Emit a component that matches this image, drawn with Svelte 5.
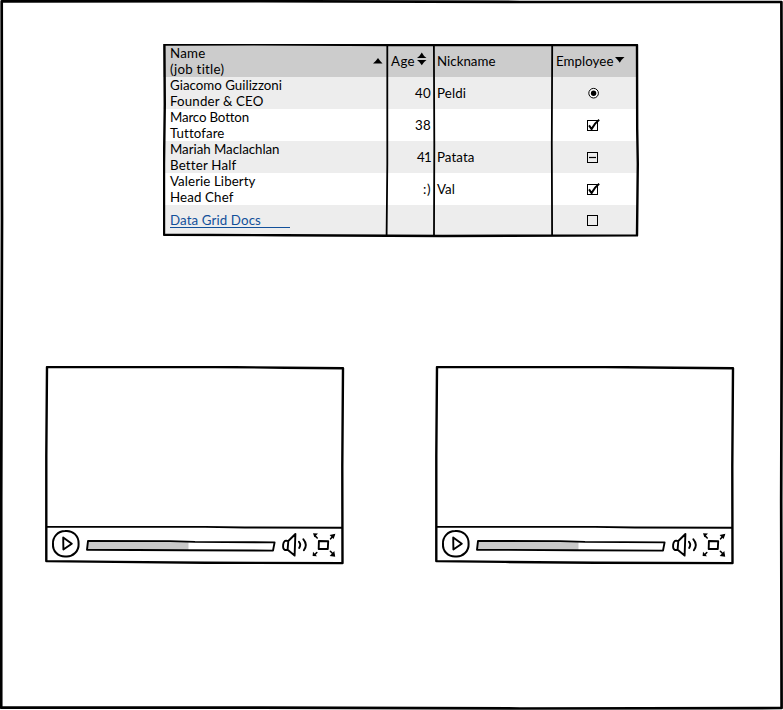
<script>
  const rows = [
    { name: ['Giacomo Guilizzoni', 'Founder & CEO'], w: [112, 93.5], age: '40', aw: 16, nick: 'Peldi', nw: 29, mark: 'radio' },
    { name: ['Marco Botton', 'Tuttofare'], w: [78.5, 54], age: '38', aw: 16, nick: '', nw: 0, mark: 'checked' },
    { name: ['Mariah Maclachlan', 'Better Half'], w: [109.5, 66], age: '41', aw: 14, nick: 'Patata', nw: 37.5, mark: 'mixed' },
    { name: ['Valerie Liberty', 'Head Chef'], w: [85.5, 63.5], age: ':)', aw: 8, nick: 'Val', nw: 18, mark: 'checked' }
  ];
  const players = ['left', 'right'];

  // Spread the letters so that a label takes up the given width.
  function fit(node, width) {
    const natural = node.getBoundingClientRect().width;
    const n = node.textContent.length;
    const gap = (width - natural) / n;
    node.style.letterSpacing = `${gap}px`;
  }
</script>

{#snippet mark(kind)}
  <svg class="mark" width="16" height="16" viewBox="0 0 16 16">
    {#if kind === 'radio'}
      <circle cx="8.6" cy="8.2" r="4.8" fill="#fff" stroke="#000" stroke-width="1" />
      <circle cx="8.6" cy="8.2" r="2.7" />
    {:else}
      <rect x="2.5" y="3.5" width="10" height="10" fill="none" stroke="#000" stroke-width="1" />
      {#if kind === 'checked'}
        <path d="M4 8.4 L6.6 12 Q9.8 6 14.2 2.8" fill="none" stroke="#000" stroke-width="2" />
      {:else if kind === 'mixed'}
        <path d="M4 8.5 H11" stroke="#000" stroke-width="1.2" />
      {/if}
    {/if}
  </svg>
{/snippet}

<main>
  <svg class="ink outer" width="783" height="710" viewBox="0 0 783 710">
    <path d="M1.7 1.4 L260 1.2 L520 2 L781.4 2 L782 240 L781.2 500 L781.6 708 L520 708.5 L260 707.7 L1.2 707.7 L1.2 500 L2 220 Z" />
  </svg>

  <section class="grid">
    <div class="row head">
      <div class="cell name">
        <span><i use:fit={35.5}>Name</i></span>
        <span><i use:fit={54.5}>(job title)</i></span>
        <svg class="sort" width="10" height="6" viewBox="0 0 10 6"><path d="M0 5.5 Q3 3 5 0 Q7 3 9.5 5.5Z" /></svg>
      </div>
      <div class="cell age-head">
        <i use:fit={24}>Age</i>
        <svg width="10" height="14" viewBox="0 0 10 14"><path d="M0 6 Q3 4 4.8 .5 Q6.5 4 9.5 6Z M0 8 L9.5 8 Q6.5 10 4.8 13.2 Q3 10 0 8Z" /></svg>
      </div>
      <div class="cell nick"><i use:fit={58.5}>Nickname</i></div>
      <div class="cell emp-head">
        <i use:fit={57.5}>Employee</i>
        <svg width="10" height="6" viewBox="0 0 10 6"><path d="M0 0 L9.5 0 Q6 3 4.8 5.8 Q3 3 0 0Z" /></svg>
      </div>
    </div>
    {#each rows as r}
      <div class="row">
        <div class="cell name">
          {#each r.name as line, k}
            <span><i use:fit={r.w[k]}>{line}</i></span>
          {/each}
        </div>
        <div class="cell age"><i use:fit={r.aw}>{r.age}</i></div>
        <div class="cell nick">{#if r.nick}<i use:fit={r.nw}>{r.nick}</i>{/if}</div>
        <div class="cell emp">{@render mark(r.mark)}</div>
      </div>
    {/each}
    <div class="row last">
      <div class="cell name"><a href="#docs"><i use:fit={91}>Data Grid Docs</i></a></div>
      <div class="cell"></div>
      <div class="cell"></div>
      <div class="cell emp">{@render mark('empty')}</div>
    </div>
    <svg class="ink" width="476" height="194" viewBox="0 0 476 194">
      <path d="M1.4 .6 L90 .3 L230 1 L474 1 L474.2 85 L474.8 120 L474 191.4 L280 192 L120 191.2 L1 190.8 L1 120 L1.8 60Z" />
      <path class="rule" d="M224.3 1 L224.3 120 L223.6 191 M270.9 1 L271.3 100 L271 192 M389.2 1 L388.8 100 L389.1 192" />
    </svg>
  </section>

  <div class="players">
    {#each players as side (side)}
      <section class="player">
        <div class="screen"></div>
        <div class="controls">
          <svg class="play" width="30" height="30" viewBox="0 0 30 30">
            <path d="M14 2 C22 1 28 7 27.6 15 C28 22 22 28 15 27.5 C7 28 1.5 22 2 15 C1.5 8 7 2 14 2Z" />
            <path class="thin" d="M12.2 8.5 L20.8 14.7 L12.4 20.5Z" />
          </svg>
          <svg class="track" width="192" height="14" viewBox="0 0 192 14">
            <path class="fill" d="M3 2 H103.5 V11 H3Z" />
            <path class="thin" d="M3 2 L85 2.1 L110 2.9 L189.6 3.4 L188 11.6 L100 11.3 L2 10.7Z" />
          </svg>
          <svg class="sound" width="28" height="26" viewBox="0 0 28 26">
            <path class="thin" d="M5.5 8.7 C1.6 8 1 17 4 18 L6.6 17.8 L7.3 9 L14.4 2 L13.6 23.6 L6.6 17.8 M5.5 8.7 L7.3 9" />
            <path class="thin" d="M18 9.8 Q20.4 12.5 18.2 16 M22.4 7.3 Q27 12.5 22.9 18.3" />
          </svg>
          <svg class="full" width="24" height="26" viewBox="0 0 24 26">
            <path class="thin" d="M6.9 9 L16.2 9.2 L15.8 17 L6.7 17Z" />
            <path class="dash" d="M2.8 3.6 L5.2 6 M18.6 6.8 L21.6 3.6 M4.8 20.5 L2.7 22.7 M18.4 19.3 L21.6 22.5" />
            <path class="solid" d="M1 1.2 L6 1.6 L2.4 5.3Z M17.6 3 L23.4 1.8 L21.6 7Z M1 19.8 L5 24.2 L.6 24Z M22.3 19 L23.2 24.8 L17.7 24Z" />
          </svg>
        </div>
        <svg class="ink" width="300" height="200" viewBox="0 0 300 200">
          <path d="M2 1.1 L170 1 L240 1.7 L298 2.2 L297.3 100 L297.5 197.1 L160 196.8 L70 195.9 L1.3 195.1 L1.3 90Z" />
          <path class="thin" d="M2 160.9 L160 160.9 L200 161.5 L297 161.8" />
        </svg>
      </section>
    {/each}
  </div>
</main>

<style>
  :global(body) { margin: 0; background: #fff; }
  main {
    position: relative;
    box-sizing: border-box;
    width: 783px;
    height: 710px;
    padding-top: 44px;
    overflow: hidden;
    font: 400 13.3px/16px Lato, "Liberation Sans", sans-serif;
    color: #000;
  }
  i { font-style: normal; white-space: nowrap; display: inline-block; }
  svg { display: block; flex: none; }
  .ink {
    position: absolute;
    left: 0;
    top: 0;
    fill: none;
    stroke: #000;
    stroke-width: 2.4;
    stroke-linejoin: round;
    pointer-events: none;
  }
  .outer { stroke-width: 2.7; }
  .ink .rule { stroke-width: 1.8; }
  .grid { position: relative; width: 474px; height: 192px; margin-left: 163px; }
  .row {
    display: grid;
    grid-template-columns: 224px 47px 118px 85px;
    height: 32px;
  }
  .row:nth-child(even) { background: #ededed; }
  .head { background: #ccc; height: 33px; }
  .last { background: #ededed; height: 31px; }
  .cell { display: flex; align-items: center; position: relative; }
  .name { flex-direction: column; align-items: flex-start; padding-left: 7px; }
  .head .name { padding-top: 1px; }
  .name span { display: block; height: 16px; }
  .sort { position: absolute; right: 4px; top: 14px; }
  .age-head { padding-left: 4px; gap: 2px; padding-top: 1px; }
  .age-head svg { margin-top: -4px; }
  .emp-head { padding-left: 4px; gap: 1.5px; padding-top: 1px; }
  .emp-head svg { margin-top: -3px; }
  .nick { padding-left: 3px; }
  .head .nick { padding-top: 1px; }
  .age { justify-content: flex-end; padding-right: 3px; }
  .emp { padding-left: 33px; }
  .last .emp { padding-bottom: 2px; }
  a {
    display: block;
    width: 120px;
    height: 15px;
    margin-top: 7px;
    border-bottom: 1px solid #12509a;
    color: #12509a;
    text-decoration: none;
  }
  .players { display: flex; gap: 90px; padding: 130px 0 0 45px; }
  .player { position: relative; width: 300px; height: 200px; }
  .screen { height: 162px; }
  .controls {
    display: flex;
    height: 36px;
    fill: none;
    stroke: #000;
    stroke-width: 2;
    stroke-linejoin: round;
    stroke-linecap: round;
  }
  .thin { stroke-width: 1.9; }
  .dash { stroke-width: 1.6; }
  .fill { fill: #c9c9c9; stroke: none; }
  .solid { fill: #000; stroke: none; }
  .play { margin: 1px 0 0 6px; }
  .track { margin: 10.5px 0 0 4px; }
  .sound { margin: 4px 0 0 4px; }
  .full { margin: 4px 0 0 3px; }
</style>
